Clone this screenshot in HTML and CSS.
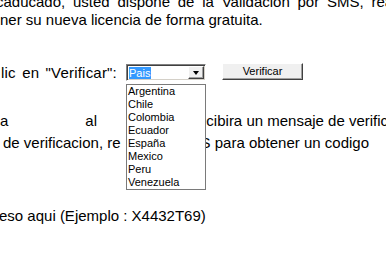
FILE: index.html
```html
<!DOCTYPE html>
<html lang="es">
<head>
  <meta charset="UTF-8" />
  <title>Validacion por SMS</title>
  <link rel="stylesheet" href="styles.css">
</head>
<body>
  <div class="page">
    <div class="intro">
      <div class="line first">caducado, usted dispone de la Validacion por SMS, realice</div>
      <div class="line">ner su nueva licencia de forma gratuita.</div>
    </div>

    <div class="verify-row">
      <span class="label">lic en "Verificar":</span>
      <div class="combo">
        <span class="combo-value"><span class="selected">Pais</span></span>
        <span class="combo-arrow"><span class="tri"></span></span>
        <ul class="combo-list">
          <li>Argentina</li>
          <li>Chile</li>
          <li>Colombia</li>
          <li>Ecuador</li>
          <li>España</li>
          <li>Mexico</li>
          <li>Peru</li>
          <li>Venezuela</li>
        </ul>
      </div>
      <button class="btn">Verificar</button>
    </div>

    <div class="info">
      <div class="info-line">
        <span>a</span>
        <span class="w-al">al</span>
        <span class="w-rest">recibira un mensaje de verificacion</span>
      </div>
      <div class="info-line">
        <span class="w-de">de verificacion, re</span>
        <span class="w-sms">S para obtener un codigo</span>
      </div>
    </div>

    <div class="line code">eso aqui (Ejemplo : X4432T69)</div>
  </div>
</body>
</html>
```

FILE: styles.css
```css
html, body {
  margin: 0;
  background: #fff;
}
body {
  font-family: "Liberation Sans", Arial, sans-serif;
  font-size: 15px;
  color: #000;
  overflow: hidden;
  white-space: nowrap;
  width: 386px;
  height: 268px;
}
.page {
  display: flex;
  flex-direction: column;
}
.line {
  line-height: 18px;
  height: 18px;
}
.intro {
  margin-top: -7px;
}
.first {
  text-indent: -4px;
  word-spacing: 3.6px;
}

/* --- verify row --- */
.verify-row {
  display: flex;
  align-items: flex-start;
  margin-top: 35px;
  height: 18px;
}
.label {
  line-height: 18px;
  margin-left: 1px;
  width: 125px;
  word-spacing: 2px;
  letter-spacing: 0.2px;
}
.combo {
  position: relative;
  display: flex;
  width: 80px;
  height: 17px;
  box-sizing: border-box;
  border-top: 1px solid #808080;
  border-left: 1px solid #808080;
  border-right: 1px solid #fff;
  border-bottom: 1px solid #fff;
  box-shadow: inset 1px 1px 0 #404040, inset -1px -1px 0 #d4d0c8;
  background: #fff;
  font-size: 11px;
}
.combo-value {
  flex: 1;
  padding: 2px 0 0 2px;
  line-height: 12px;
}
.selected {
  display: inline-block;
  background: #3399ff;
  color: #fff;
  padding: 0 1px 0 0;
}
.combo-arrow {
  width: 16px;
  height: 13px;
  margin: 1px 1px 0 0;
  box-sizing: border-box;
  background: #f0f0f0;
  border-top: 1px solid #fff;
  border-left: 1px solid #fff;
  border-right: 1px solid #404040;
  border-bottom: 1px solid #404040;
  box-shadow: inset -1px -1px 0 #a0a0a0;
  display: flex;
  align-items: center;
  justify-content: center;
}
.tri {
  width: 0;
  height: 0;
  border-left: 3.5px solid transparent;
  border-right: 3.5px solid transparent;
  border-top: 4px solid #000;
  margin-top: 1px;
}
.combo-list {
  position: absolute;
  top: 19px;
  left: -1px;
  width: 80px;
  box-sizing: border-box;
  margin: 0;
  padding: 0;
  list-style: none;
  background: #fff;
  border: 1px solid #7a7a7a;
  z-index: 2;
}
.combo-list li {
  height: 13px;
  line-height: 13px;
  padding-left: 1px;
  font-size: 11px;
}
.btn {
  margin: -1px 0 0 16px;
  width: 81px;
  height: 17px;
  padding: 0;
  box-sizing: border-box;
  font-family: "Liberation Sans", Arial, sans-serif;
  font-size: 11px;
  color: #000;
  background: #f0f0f0;
  border-top: 1px solid #fff;
  border-left: 1px solid #fff;
  border-right: 1px solid #404040;
  border-bottom: 1px solid #404040;
  box-shadow: inset -1px -1px 0 #a0a0a0;
  line-height: 13px;
}

/* --- info text --- */
.info {
  margin-top: 28px;
}
.info-line {
  display: flex;
  line-height: 22px;
  height: 22px;
}
.w-al {
  margin-left: 77px;
}
.w-rest {
  margin-left: 96px;
}
.w-de {
  margin-left: 3px;
}
.w-sms {
  margin-left: 80px;
}
.code {
  margin-top: 53px;
  text-indent: -1px;
}
```
